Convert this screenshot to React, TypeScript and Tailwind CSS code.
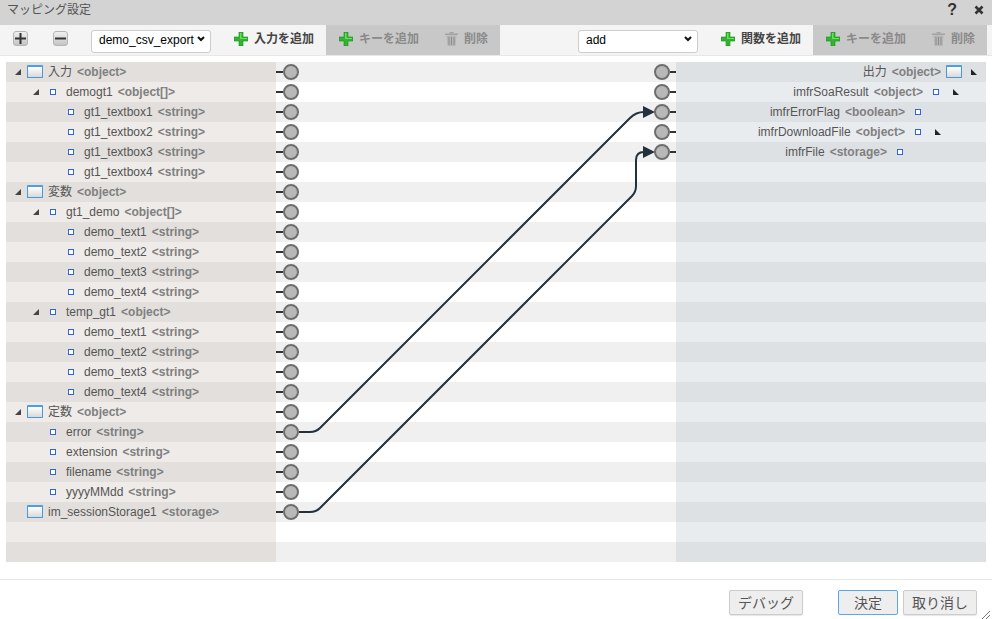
const leftRows = [
  { level: 0, icon: "window", open: true, name: "入力", type: "<object>" },
  { level: 1, icon: "square", open: true, name: "demogt1", type: "<object[]>" },
  { level: 2, icon: "square", name: "gt1_textbox1", type: "<string>" },
  { level: 2, icon: "square", name: "gt1_textbox2", type: "<string>" },
  { level: 2, icon: "square", name: "gt1_textbox3", type: "<string>" },
  { level: 2, icon: "square", name: "gt1_textbox4", type: "<string>" },
  { level: 0, icon: "window", open: true, name: "変数", type: "<object>" },
  { level: 1, icon: "square", open: true, name: "gt1_demo", type: "<object[]>" },
  { level: 2, icon: "square", name: "demo_text1", type: "<string>" },
  { level: 2, icon: "square", name: "demo_text2", type: "<string>" },
  { level: 2, icon: "square", name: "demo_text3", type: "<string>" },
  { level: 2, icon: "square", name: "demo_text4", type: "<string>" },
  { level: 1, icon: "square", open: true, name: "temp_gt1", type: "<object>" },
  { level: 2, icon: "square", name: "demo_text1", type: "<string>" },
  { level: 2, icon: "square", name: "demo_text2", type: "<string>" },
  { level: 2, icon: "square", name: "demo_text3", type: "<string>" },
  { level: 2, icon: "square", name: "demo_text4", type: "<string>" },
  { level: 0, icon: "window", open: true, name: "定数", type: "<object>" },
  { level: 1, icon: "square", name: "error", type: "<string>" },
  { level: 1, icon: "square", name: "extension", type: "<string>" },
  { level: 1, icon: "square", name: "filename", type: "<string>" },
  { level: 1, icon: "square", name: "yyyyMMdd", type: "<string>" },
  { level: 0, icon: "window", name: "im_sessionStorage1", type: "<storage>" },
];

const rightRows = [
  { level: 0, icon: "window", open: true, name: "出力", type: "<object>" },
  { level: 1, icon: "square", open: true, name: "imfrSoaResult", type: "<object>" },
  { level: 2, icon: "square", name: "imfrErrorFlag", type: "<boolean>" },
  { level: 2, icon: "square", open: true, name: "imfrDownloadFile", type: "<object>" },
  { level: 3, icon: "square", name: "imfrFile", type: "<storage>" },
];

const indents = ["w-0", "w-[18px]", "w-[36px]", "w-[54px]"];
const TOTAL_ROWS = Array.from({ length: 25 }, (_, i) => i);

const PlusIcon = () => (
  <svg width="14" height="14" viewBox="0 0 14 14" className="shrink-0">
    <path d="M5 0h4v5h5v4H9v5H5V9H0V5h5z" fill="#2fb62f" stroke="#1d8f1d" strokeWidth="0.6" />
    <path d="M6 1h1.5v5H13v1H6z" fill="#6fdc5c" />
  </svg>
);

const TrashIcon = () => (
  <svg width="13" height="15" viewBox="0 0 13 15" className="shrink-0">
    <path d="M0 2.5h13V4H0z" fill="#a3a3a3" />
    <path d="M4.5 1h4v1.5h-4z" fill="#a3a3a3" />
    <path d="M1.5 4.5h10L10.5 15h-8z" fill="#b5b5b5" />
    <path d="M4 6v8M6.5 6v8M9 6v8" stroke="#8e8e8e" strokeWidth="1" />
  </svg>
);

const SquareBtn = ({ minus }: { minus?: boolean }) => (
  <div className="w-[15px] h-[15px] rounded-[3px] border border-[#b5b5b5] bg-gradient-to-b from-[#f0f0f0] to-[#c4c4c4] flex items-center justify-center shrink-0">
    <svg width="11" height="11" viewBox="0 0 11 11">
      {minus ? <path d="M0 4.5h11v2H0z" fill="#333" /> : <path d="M4.5 0h2v4.5H11v2H6.5V11h-2V6.5H0v-2h4.5z" fill="#333" />}
    </svg>
  </div>
);

const WindowIcon = () => (
  <div className="w-4 h-[13px] -mt-px border border-[#4f97d3] border-t-2 border-t-[#4aa0e0] bg-gradient-to-b from-white to-[#d9d9d9] rounded-[1px]" />
);

const BlueSquare = () => <div className="w-[6px] h-[6px] border border-[#2f62e6] bg-white" />;

const Tri = ({ flip }: { flip?: boolean }) => (
  <svg width="6" height="6" viewBox="0 0 6 6">
    <path d={flip ? "M0 0L6 6H0z" : "M6 0V6H0z"} fill={flip ? "#222" : "#444"} />
  </svg>
);

const ToolBtn = ({ label, icon, disabled }: { label: string; icon: "plus" | "trash"; disabled?: boolean }) => (
  <div className={`flex items-center gap-[6px] h-full pb-[3px] pr-[12px] text-xs font-bold ${icon === "trash" ? "pl-[14px]" : "pl-[13px]"} ${disabled ? "text-[#8a8a8a]" : "text-[#444]"}`}>
    {icon === "plus" ? <PlusIcon /> : <TrashIcon />}
    <span className="whitespace-nowrap">{label}</span>
  </div>
);

const Select = ({ value }: { value: string }) => (
  <div className="relative w-[120px] h-[23px]">
    <select className="appearance-none w-full h-full bg-white border border-[#ccc] rounded-[3px] pl-[7px] pb-[2px] text-xs text-black">
      <option>{value}</option>
    </select>
    <svg className="absolute right-[6px] top-[9px] pointer-events-none" width="8" height="6" viewBox="0 0 8 6" fill="none">
      <path d="M1 1l3 3 3-3" stroke="#111" strokeWidth="2" />
    </svg>
  </div>
);

const Port = ({ side }: { side: "left" | "right" }) => (
  <div className={`flex items-center ${side === "right" ? "flex-row-reverse" : ""}`}>
    <div className={`h-[2px] bg-[#333] ${side === "left" ? "w-[7px]" : "w-[6px]"}`} />
    <div className="w-4 h-4 rounded-full border-2 border-[#6e6e6e] bg-[#b8b8b8]" />
  </div>
);

const Label = ({ name, type }: { name: string; type: string }) => (
  <span className="whitespace-nowrap text-xs">
    <span className="text-[#555]">{name}</span>
    <span className="font-bold text-[#808080] ml-[5px]">{type}</span>
  </span>
);

export default function App() {
  return (
    <div className="w-[992px] h-[619px] overflow-hidden bg-white flex flex-col font-['Liberation_Sans','Noto_Sans_CJK_JP',sans-serif]">
      {/* title */}
      <div className="h-[25px] bg-[#d3d3d3] flex items-center pl-[7px] pr-[8px] pb-[6px] text-xs text-[#555] shrink-0">
        <span>マッピング設定</span>
        <span className="ml-auto mr-[17px] text-base font-bold text-[#333]">?</span>
        <svg width="10" height="10" viewBox="0 0 10 10">
          <path d="M1.5 1.5l7 7M8.5 1.5l-7 7" stroke="#333" strokeWidth="2.6" />
        </svg>
      </div>

      {/* toolbar */}
      <div className="h-[31px] bg-[#f4f4f4] border-b border-[#e8e8e8] flex items-stretch shrink-0 pl-[13px] pr-[5px]">
        <div className="flex items-center pb-[3px]">
          <SquareBtn />
          <div className="w-[25px]" />
          <SquareBtn minus />
          <div className="w-[23px]" />
          <Select value="demo_csv_export" />
          <div className="w-[10px]" />
        </div>
        <ToolBtn label="入力を追加" icon="plus" />
        <div className="flex bg-[#c8c8c8]">
          <ToolBtn label="キーを追加" icon="plus" disabled />
          <ToolBtn label="削除" icon="trash" disabled />
        </div>
        <div className="flex-1 flex items-center justify-end pb-[3px] pr-[10px]">
          <Select value="add" />
        </div>
        <ToolBtn label="関数を追加" icon="plus" />
        <div className="flex bg-[#c8c8c8]">
          <ToolBtn label="キーを追加" icon="plus" disabled />
          <ToolBtn label="削除" icon="trash" disabled />
        </div>
      </div>

      {/* mapping */}
      <div className="relative mt-[6px] mx-[6px] flex shrink-0">
        <div className="w-[270px]">
          {TOTAL_ROWS.map((i) => {
            const r = leftRows[i];
            return (
              <div key={i} className={`h-5 flex items-center pl-[9px] ${i % 2 === 0 ? "bg-[#e2dfdc]" : "bg-[#eeebe8]"}`}>
                {r && (
                  <>
                    <div className={indents[r.level]} />
                    <div className="w-[12px] flex">{r.open && <Tri />}</div>
                    {r.icon === "window" ? (
                      <div className="w-[21px]"><WindowIcon /></div>
                    ) : (
                      <div className="w-[21px] pl-[5px]"><BlueSquare /></div>
                    )}
                    <Label name={r.name} type={r.type} />
                  </>
                )}
              </div>
            );
          })}
        </div>

        <div className="w-[400px]">
          {TOTAL_ROWS.map((i) => (
            <div key={i} className={`h-5 flex items-center justify-between ${i % 2 === 0 ? "bg-[#f0f0f0]" : "bg-white"}`}>
              {leftRows[i] ? <Port side="left" /> : <div />}
              {rightRows[i] ? <Port side="right" /> : <div />}
            </div>
          ))}
        </div>

        <div className="w-[310px]">
          {TOTAL_ROWS.map((i) => {
            const r = rightRows[i];
            return (
              <div key={i} className={`h-5 flex items-center justify-end pr-[9px] ${i % 2 === 0 ? "bg-[#dee1e4]" : "bg-[#e9ecef]"}`}>
                {r && (
                  <>
                    <Label name={r.name} type={r.type} />
                    {r.icon === "window" ? (
                      <div className="w-[21px] flex justify-end"><WindowIcon /></div>
                    ) : (
                      <div className="w-[21px] flex justify-end pr-[5px]"><BlueSquare /></div>
                    )}
                    <div className="w-[15px] flex justify-end">{r.open && <Tri flip />}</div>
                    <div className={indents[r.level]} />
                  </>
                )}
              </div>
            );
          })}
        </div>

        {/* connections, drawn over the rows */}
        <svg className="absolute left-0 top-0 pointer-events-none" width="980" height="500" viewBox="6 62 980 500" fill="none">
          <path d="M299 432H310Q316 432 320 428L630 118Q636 112 644 112" stroke="#23313d" strokeWidth="2" />
          <path d="M299 512H310Q316 512 320 508L632 196Q636 192 636 186V160Q636 152 644 152" stroke="#23313d" strokeWidth="2" />
          <path d="M643 106L655 112L643 118z" fill="#23313d" />
          <path d="M643 146L655 152L643 158z" fill="#23313d" />
        </svg>
      </div>

      {/* footer */}
      <div className="relative mt-[17px] flex-1 border-t border-[#e8e8e8] flex items-start pt-[10px] pl-[729px] text-sm text-[#555]">
        <button className="w-[74px] h-[25px] bg-[#eeeeee] border border-[#ccc] rounded-[2px] shadow-[0_1px_1px_rgba(0,0,0,0.1)]">デバッグ</button>
        <button className="w-[60px] h-[25px] ml-[35px] bg-[#eeeeee] border border-[#5aa9ee] rounded-[2px]">決定</button>
        <button className="w-[74px] h-[25px] ml-[5px] bg-[#eeeeee] border border-[#ccc] rounded-[2px] shadow-[0_1px_1px_rgba(0,0,0,0.1)]">取り消し</button>
        <svg className="absolute right-[2px] bottom-0" width="8" height="8" viewBox="0 0 8 8">
          <path d="M0 8L8 0M4 8L8 4" stroke="#777" strokeWidth="1" />
        </svg>
      </div>
    </div>
  );
}
